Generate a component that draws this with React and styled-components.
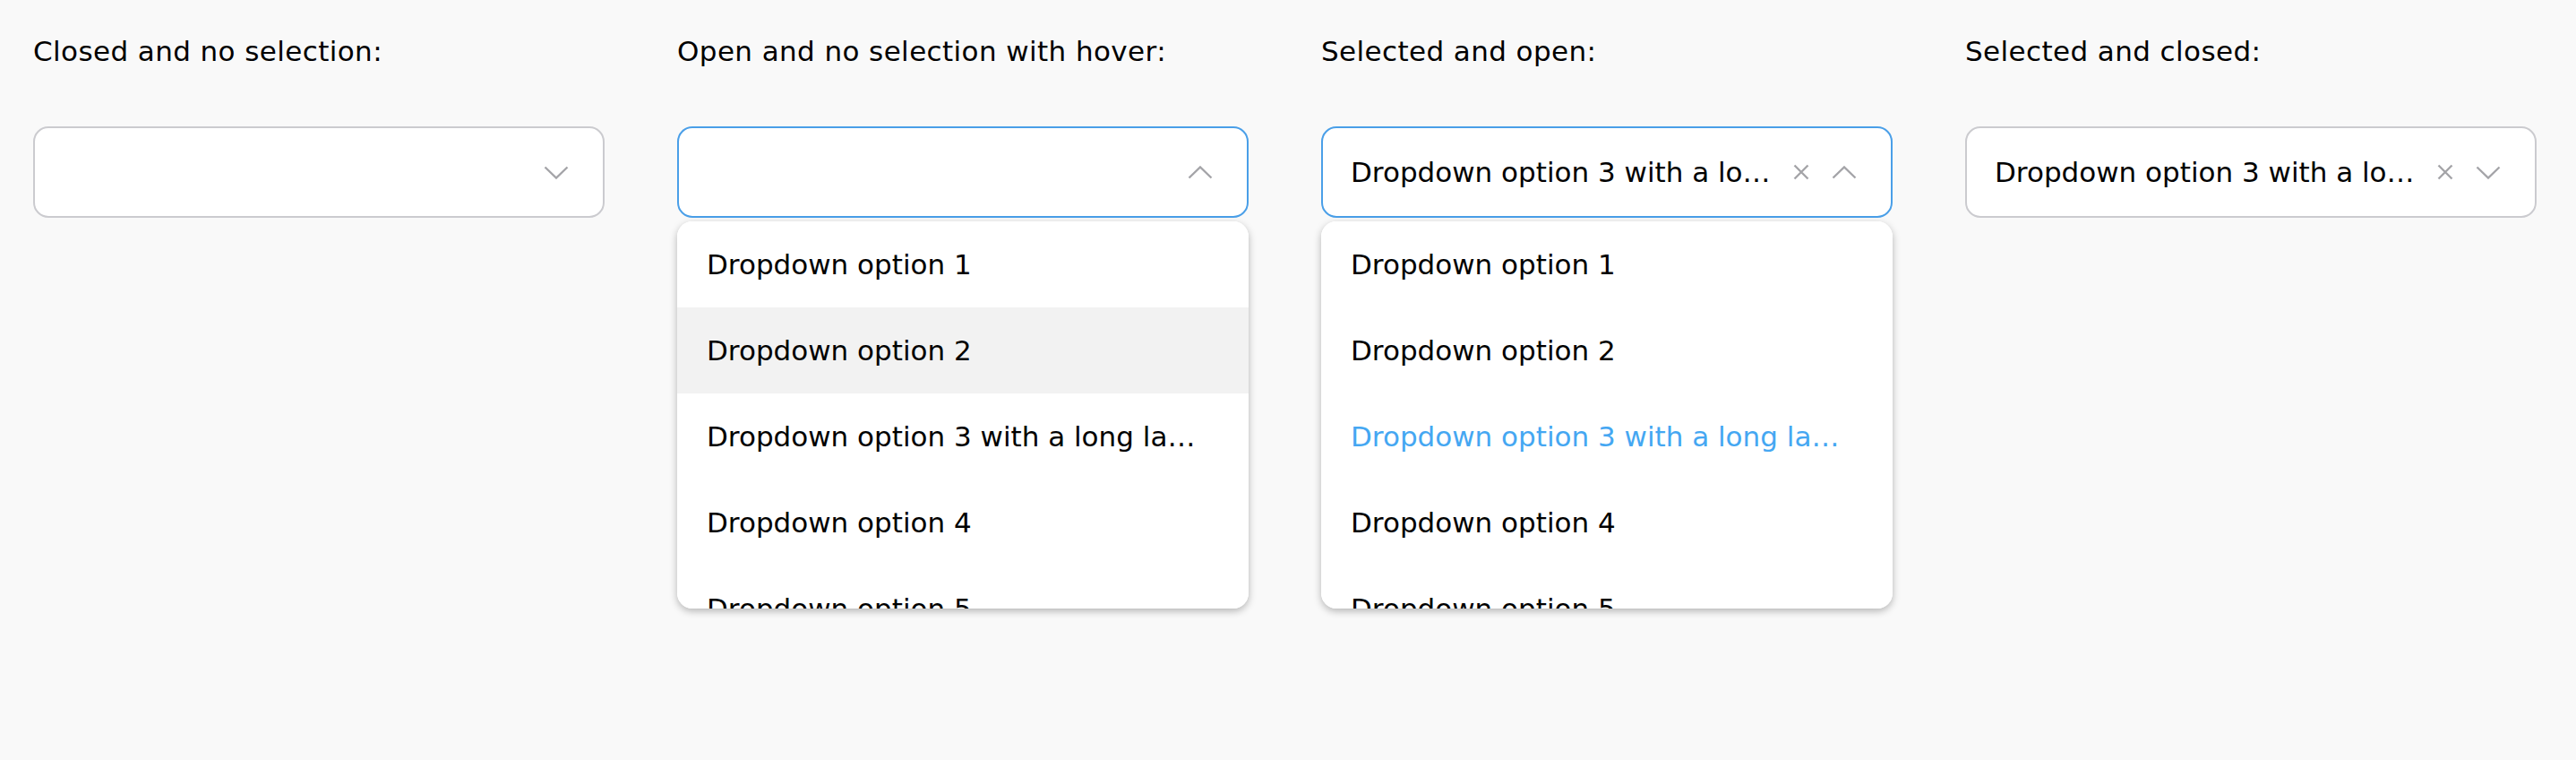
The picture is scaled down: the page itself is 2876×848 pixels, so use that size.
import React from "react";
import styled, { createGlobalStyle } from "styled-components";

const Global = createGlobalStyle`
  html, body { margin: 0; padding: 0; background: #f9f9f9; }
  body { font-family: "DejaVu Sans", "Open Sans", sans-serif; color: #000; }
  * { box-sizing: border-box; }
`;

const Page = styled.div`
  display: grid;
  grid-template-columns: repeat(4, 638px);
  column-gap: 81px;
  padding: 33px 0 0 37px;
  min-height: 848px;
`;

const Column = styled.section`
  display: flex;
  flex-direction: column;
  gap: 60px;
`;

const Label = styled.div`
  font-size: 31px;
  letter-spacing: 0.4px;
  line-height: 48px;
  height: 48px;
  white-space: nowrap;
`;

const Field = styled.div`
  position: relative;
`;

const Control = styled.div`
  display: flex;
  align-items: center;
  gap: 22px;
  height: 102px;
  padding: 0 38px 0 31px;
  background: #fff;
  border: 2px solid ${(p) => (p.$open ? "#4a9fe8" : "#cbcbcf")};
  border-radius: 17px;
`;

const Value = styled.div`
  flex: 1;
  min-width: 0;
  font-size: 31px;
  line-height: 44px;
  white-space: nowrap;
  overflow: hidden;
  text-overflow: ellipsis;
`;

const Icons = styled.div`
  display: flex;
  align-items: center;
  gap: 25px;
  color: #a4a4a8;
`;

const Menu = styled.ul`
  position: absolute;
  left: 0;
  right: 0;
  top: calc(100% + 4px);
  margin: 0;
  padding: 0;
  list-style: none;
  height: 432px;
  overflow: hidden;
  background: #fff;
  border-radius: 17px;
  box-shadow: 0 3px 9px rgba(0, 0, 0, 0.28);
`;

const Option = styled.li`
  height: 96px;
  display: flex;
  align-items: center;
  padding: 0 48px 0 33px;
  font-size: 31px;
  background: ${(p) => (p.$hover ? "#f2f2f2" : "#fff")};
  color: ${(p) => (p.$selected ? "#45a7f2" : "#000")};
`;

const OptionText = styled.span`
  display: block;
  min-width: 0;
  white-space: nowrap;
  overflow: hidden;
  text-overflow: ellipsis;
`;

const Chevron = ({ up }) => (
  <svg width="28" height="15" viewBox="0 0 28 15" fill="none">
    <path
      d={up ? "M1.5 13.5 L14 1.5 L26.5 13.5" : "M1.5 1.5 L14 13.5 L26.5 1.5"}
      stroke="currentColor"
      strokeWidth="2.4"
    />
  </svg>
);

const Cross = () => (
  <svg width="18" height="18" viewBox="0 0 18 18" fill="none">
    <path d="M1.5 1.5 L16.5 16.5 M16.5 1.5 L1.5 16.5" stroke="currentColor" strokeWidth="2.4" />
  </svg>
);

const options = [
  "Dropdown option 1",
  "Dropdown option 2",
  "Dropdown option 3 with a long label",
  "Dropdown option 4",
  "Dropdown option 5",
];

const Dropdown = ({ open, value, hoverIndex, selectedIndex }) => (
  <Field>
    <Control $open={open}>
      <Value>{value}</Value>
      <Icons>
        {value && <Cross />}
        <Chevron up={open} />
      </Icons>
    </Control>
    {open && (
      <Menu>
        {options.map((o, i) => (
          <Option key={o} $hover={i === hoverIndex} $selected={i === selectedIndex}>
            <OptionText>{o}</OptionText>
          </Option>
        ))}
      </Menu>
    )}
  </Field>
);

export default function App() {
  return (
    <>
      <Global />
      <Page>
        <Column>
          <Label>Closed and no selection:</Label>
          <Dropdown open={false} value="" />
        </Column>
        <Column>
          <Label>Open and no selection with hover:</Label>
          <Dropdown open value="" hoverIndex={1} />
        </Column>
        <Column>
          <Label>Selected and open:</Label>
          <Dropdown open value={options[2]} selectedIndex={2} />
        </Column>
        <Column>
          <Label>Selected and closed:</Label>
          <Dropdown open={false} value={options[2]} />
        </Column>
      </Page>
    </>
  );
}
